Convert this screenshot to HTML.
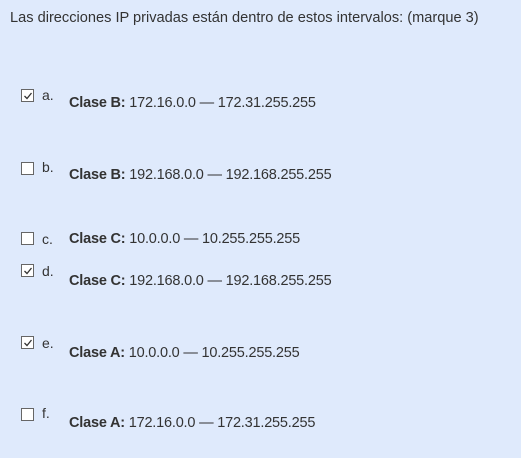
<!DOCTYPE html>
<html><head><style>
body{margin:0;width:521px;height:458px;background:#dfeafc;font-family:"Liberation Sans",sans-serif;color:#333;font-size:13px;position:relative;overflow:hidden}
.q{position:absolute;left:10px;top:10px;font-size:14.6px;color:#333;white-space:nowrap}
.cb{position:absolute;left:21px;width:11px;height:11px;border:1px solid #666;background:#fff}
.cb svg{position:absolute;left:1px;top:1px}
.l{position:absolute;left:42px;font-size:14px;color:#333}
.t{position:absolute;left:69px;font-size:14.5px;color:#333;letter-spacing:-0.2px;white-space:nowrap}
b{color:#333}
</style></head><body>
<div class="q">Las direcciones IP privadas están dentro de estos intervalos: (marque 3)</div>

<div class="cb" style="top:89px"><svg width="10" height="10"><path d="M1.5 5 L4 7.5 L8.5 2" stroke="#333" stroke-width="1.3" fill="none"/></svg></div>
<div class="l" style="top:87px">a.</div>
<div class="t" style="top:95px"><b>Clase B:</b> 172.16.0.0 — 172.31.255.255</div>

<div class="cb" style="top:162px"></div>
<div class="l" style="top:159px">b.</div>
<div class="t" style="top:167px"><b>Clase B:</b> 192.168.0.0 — 192.168.255.255</div>

<div class="cb" style="top:232px"></div>
<div class="l" style="top:231px">c.</div>
<div class="t" style="top:231px"><b>Clase C:</b> 10.0.0.0 — 10.255.255.255</div>

<div class="cb" style="top:264px"><svg width="10" height="10"><path d="M1.5 5 L4 7.5 L8.5 2" stroke="#333" stroke-width="1.3" fill="none"/></svg></div>
<div class="l" style="top:263px">d.</div>
<div class="t" style="top:273px"><b>Clase C:</b> 192.168.0.0 — 192.168.255.255</div>

<div class="cb" style="top:336px"><svg width="10" height="10"><path d="M1.5 5 L4 7.5 L8.5 2" stroke="#333" stroke-width="1.3" fill="none"/></svg></div>
<div class="l" style="top:335px">e.</div>
<div class="t" style="top:345px"><b>Clase A:</b> 10.0.0.0 — 10.255.255.255</div>

<div class="cb" style="top:408px"></div>
<div class="l" style="top:405px">f.</div>
<div class="t" style="top:415px"><b>Clase A:</b> 172.16.0.0 — 172.31.255.255</div>
</body></html>
